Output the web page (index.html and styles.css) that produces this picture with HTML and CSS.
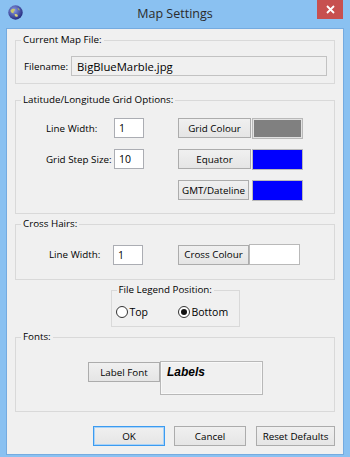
FILE: index.html
```html
<!DOCTYPE html>
<html lang="en">

<head>
    <meta charset="UTF-8">
    <title>Map Settings</title>
    <link rel="stylesheet" href="styles.css">
</head>

<body>
    <div class="window">
        <div class="titlebar">
            <svg class="appIcon" width="15" height="15" viewBox="0 0 15 15">
                <defs>
                    <radialGradient id="globe" cx="40%" cy="35%" r="70%">
                        <stop offset="0" stop-color="#8a9ae6" />
                        <stop offset="1" stop-color="#1d2478" />
                    </radialGradient>
                </defs>
                <circle cx="7.5" cy="7.5" r="7.2" fill="url(#globe)" />
                <path d="M2.5 5.5 C3.5 3.5 6 3.2 7.2 4.4 C6.6 6 5.2 6.4 5.6 8.2 C4.4 8.6 2.6 7.4 2.5 5.5Z" fill="#c9c66a" />
                <path d="M6.5 9.5 C8 8.6 10 9.2 9.8 11.2 C8.8 12.4 7 12 6.5 9.5Z" fill="#d9d27a" />
                <path d="M9.5 3 C10.8 3.2 12 4.4 11.6 5.6 C10.6 5.4 9.8 4.4 9.5 3Z" fill="#9fb070" />
            </svg>
            <div class="title">Map Settings</div>
            <div class="closeBtn">
                <svg width="9" height="9" viewBox="0 0 9 9">
                    <path d="M1 1 L8 8 M8 1 L1 8" stroke="#fff" stroke-width="1.8" />
                </svg>
            </div>
        </div>

        <div class="client">
            <fieldset class="group">
                <legend>Current Map File:</legend>
                <div class="fileRow">
                    <label class="fileLabel">Filename:</label>
                    <input type="text" class="field fileField" value="BigBlueMarble.jpg" readonly>
                </div>
            </fieldset>

            <fieldset class="group gridGroup">
                <legend>Latitude/Longitude Grid Options:</legend>
                <div class="gridOpts">
                    <label>Line Width:</label>
                    <input type="text" class="field" value="1">
                    <span></span>
                    <button class="btn">Grid Colour</button>
                    <span class="swatch swGrey"></span>

                    <label>Grid Step Size:</label>
                    <input type="text" class="field" value="10">
                    <span></span>
                    <button class="btn">Equator</button>
                    <span class="swatch swBlue"></span>

                    <span></span>
                    <span></span>
                    <span></span>
                    <button class="btn gmtBtn">GMT/Dateline</button>
                    <span class="swatch swBlue"></span>
                </div>
            </fieldset>

            <fieldset class="group crossGroup">
                <legend>Cross Hairs:</legend>
                <div class="crossRow">
                    <label class="crossLabel">Line Width:</label>
                    <input type="text" class="field" value="1">
                    <button class="btn crossBtn">Cross Colour</button>
                    <span class="swatch swWhite"></span>
                </div>
            </fieldset>

            <fieldset class="group legendGroup">
                <legend>File Legend Position:</legend>
                <div class="radioRow">
                    <span class="radio"></span><span class="radioText topText">Top</span>
                    <span class="radio checked"></span><span class="radioText">Bottom</span>
                </div>
            </fieldset>

            <fieldset class="group fontGroup">
                <legend>Fonts:</legend>
                <div class="fontRow">
                    <button class="btn fontBtn">Label Font</button>
                    <div class="fontPreview">Labels</div>
                </div>
            </fieldset>

            <div class="actions">
                <button class="btn actBtn btnDefault">OK</button>
                <button class="btn actBtn">Cancel</button>
                <button class="btn actBtn resetBtn">Reset Defaults</button>
            </div>
        </div>
    </div>
</body>

</html>
```

FILE: styles.css
```css
body {
    margin: 0;
    background-color: #8ac1f1;
    font-family: "Open Sans", "Noto Sans", sans-serif;
    font-size: 9.8px;
    color: #000;
}

.window {
    width: 350px;
    height: 457px;
    overflow: hidden;
}

.titlebar {
    height: 28px;
    display: grid;
    grid-template-columns: 1fr auto 1fr;
    align-items: start;
}

.appIcon {
    margin: 5px 0 0 8px;
}

.title {
    font-size: 12.5px;
    line-height: 16px;
    margin-top: 6px;
    color: #2b2b2b;
}

.closeBtn {
    justify-self: end;
    width: 26px;
    height: 19px;
    margin-right: 7px;
    background-color: #c7504f;
    display: flex;
    align-items: center;
    justify-content: center;
}

.client {
    margin: 0 6px;
    height: 421px;
    border: 1px solid #75abe0;
    background-color: #f0f0f0;
    padding: 4px 8px 0 8px;
    box-sizing: content-box;
}

.group {
    margin: 0;
    padding: 0;
    border: 1px solid #d9d9d9;
    width: 320px;
    box-sizing: border-box;
    min-inline-size: 0;
}

.group legend {
    margin-left: 5px;
    padding: 0 2px;
    line-height: 14px;
}

label {
    white-space: nowrap;
}

.field {
    box-sizing: border-box;
    height: 20px;
    width: 30px;
    border: 1px solid #abadb3;
    background-color: #fff;
    font-family: inherit;
    font-size: 10.5px;
    padding: 0 4px;
    margin: 0;
    outline: none;
}

.btn {
    box-sizing: border-box;
    height: 20px;
    margin: 0;
    padding: 0;
    border: 1px solid #acacac;
    background: linear-gradient(#f0f0f0, #e5e5e5);
    font-family: inherit;
    font-size: 9.8px;
    color: #000;
    white-space: nowrap;
}

.swatch {
    box-sizing: border-box;
    display: block;
    height: 21px;
    border: 1px solid #b9b9b9;
    box-shadow: inset 0 0 0 1px #e2e2e2;
}

.swGrey {
    background-color: #808080;
}

.swBlue {
    background-color: #0000ff;
    box-shadow: none;
}

.swWhite {
    background-color: #fff;
    box-shadow: none;
    width: 51px;
}

/* current map file */
.fileRow {
    display: flex;
    align-items: center;
    margin: 9px 0 7px 8px;
}

.fileLabel {
    width: 47px;
}

.fileField {
    width: 256px;
    background-color: #f0f0f0;
    border-color: #c2c2c2;
    font-size: 11.3px;
    padding-left: 5px;
}

/* grid options */
.gridGroup {
    margin-top: 9px;
}

.gridOpts {
    display: grid;
    grid-template-columns: 68px 30px 34px 73px 52px;
    grid-auto-rows: 20px;
    row-gap: 11px;
    align-items: center;
    padding: 11px 0 13px 30px;
}

.gridOpts .swatch {
    margin-left: 1px;
}

.gmtBtn {
    width: 71px;
}

/* cross hairs */
.crossGroup {
    margin-top: 3px;
}

.crossRow {
    display: flex;
    align-items: center;
    padding: 13px 0 14px 33px;
}

.crossLabel {
    width: 64px;
}

.crossBtn {
    width: 71px;
    margin-left: 35px;
}

/* legend position */
.legendGroup {
    width: 129px;
    margin: 3px auto 0 auto;
}

.radioRow {
    display: flex;
    align-items: center;
    padding: 9px 0 8px 4px;
    height: 12px;
}

.radio {
    box-sizing: border-box;
    width: 12px;
    height: 12px;
    border: 1px solid #333;
    border-radius: 50%;
    background-color: #fff;
    display: flex;
    align-items: center;
    justify-content: center;
}

.radio.checked::after {
    content: "";
    width: 6px;
    height: 6px;
    border-radius: 50%;
    background-color: #111;
}

.radioText {
    margin-left: 2px;
    font-size: 10.5px;
}

.topText {
    width: 48px;
}

/* fonts */
.fontGroup {
    margin-top: 3px;
}

.fontRow {
    display: flex;
    align-items: flex-start;
    padding: 17px 0 16px 72px;
}

.fontBtn {
    width: 72px;
    margin-top: 1px;
}

.fontPreview {
    box-sizing: border-box;
    width: 103px;
    height: 34px;
    border: 1px solid #b8b8b8;
    box-shadow: inset 0 0 0 1px #f8f8f8;
    font-family: "Liberation Sans", sans-serif;
    font-weight: bold;
    font-style: italic;
    font-size: 12px;
    padding: 3px 0 0 6px;
}

/* bottom buttons */
.actions {
    display: flex;
    justify-content: flex-end;
    gap: 9px;
    margin-top: 14px;
    width: 320px;
}

.actBtn {
    width: 72px;
}

.resetBtn {
    width: 79px;
    margin-left: 1px;
}

.btnDefault {
    border-color: #3c9bf0;
    box-shadow: inset 0 0 0 1px #a9d3f8;
}
```
